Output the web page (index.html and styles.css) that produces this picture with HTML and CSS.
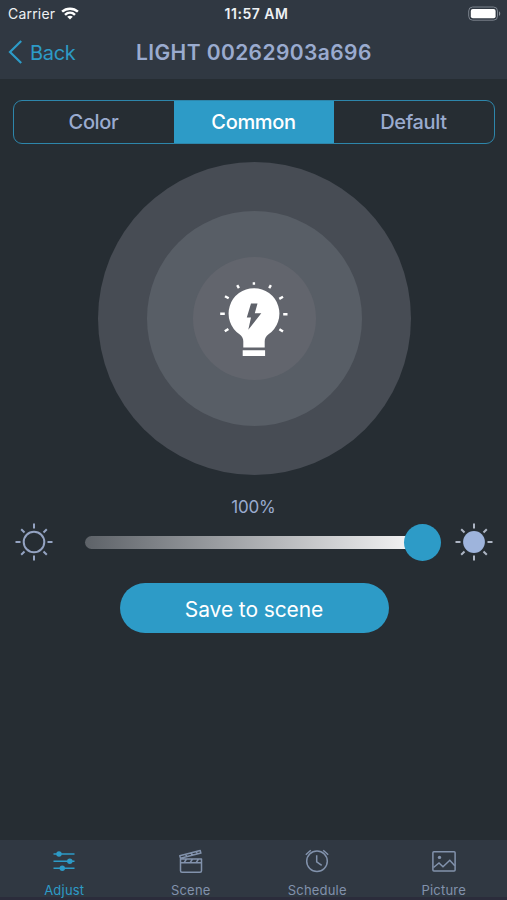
FILE: index.html
```
<!DOCTYPE html>
<html lang="en">
<head>
<meta charset="utf-8">
<title>Light</title>
<link rel="stylesheet" href="styles.css">
</head>
<body>
<div class="app">
  <header class="header">
    <div class="status">
      <div class="carrier"><span class="carrier-name">Carrier</span>
        <svg class="wifi" width="18" height="13" viewBox="0 0 18 13" fill="none" stroke="#fff" stroke-width="2.5"><path d="M1.1 4.7C5.500.6 12.500.6 16.900 4.700"/><path d="M4 7.800C6.900 5.100 11.100 5.100 14 7.800"/><path d="M9 12.600 6.200 9.700C7.800 8.300 10.200 8.300 11.800 9.700Z" fill="#fff" stroke="none"/></svg>
      </div>
      <span class="time">11:57 AM</span>
      <svg class="battery" width="33" height="16" viewBox="0 0 33 16"><rect x=".7" y="1" width="28.800" height="13.200" rx="4" fill="none" stroke="#7b838d" stroke-width="1"/><rect x="2.800" y="3" width="24.800" height="9.200" rx="2" fill="#fff"/><path d="M31 5.200c1.700.8 1.700 4 0 4.800z" fill="#8b929b"/></svg>
    </div>
    <nav class="nav">
      <a class="back"><svg width="15" height="24" viewBox="0 0 15 24" fill="none" stroke="#2d9bc7" stroke-width="2.200"><path d="M13.200 1 2 12l11.200 11"/></svg><span class="back-label">Back</span></a>
      <h1 class="title">LIGHT 00262903a696</h1>
    </nav>
  </header>

  <main class="main">
    <div class="segments">
      <div class="segment"><span>Color</span></div>
      <div class="segment selected"><span>Common</span></div>
      <div class="segment"><span>Default</span></div>
    </div>

    <div class="ring outer"><div class="ring middle"><div class="ring inner">
      <svg class="bulb" width="70" height="76" viewBox="0 0 70 76">
        <path fill="#fff" d="M35 6.200A25.300 25.300 0 0 0 20.500 52.300Q24.300 55 24.300 59.500V65.400H45.700V59.500Q45.700 55 49.500 52.300A25.300 25.300 0 0 0 35 6.200ZM23.700 68.200h22.400v5.900h-22.400z"/>
        <path fill="#5f626a" d="M32 21.500h6.500L35.800 31.300H42.300L29.300 47.800 32 35.500H27.800z"/>
        <g stroke="#fff" stroke-width="2.400"><path d="M34.900.2v2.600M18.200 3.200l1.700 3M51.900 3.200l-1.700 3M6 14.200l3.700 2.100M64 14.800l-3.700 2.100M1.200 31.700h4.600M64.200 32.200h4.300M5.800 49.200l3.600-2.300M64 49.600l-3.600-2.400"/></g>
      </svg>
    </div></div></div>

    <div class="percent">100%</div>
    <div class="dimmer">
      <svg width="38" height="38" viewBox="-19 -19 38 38" stroke="#94a3c2" stroke-width="2" fill="none"><circle r="10.300"/><path d="M0-18.500v5M0 13.500v5M-18.500 0h5M13.500 0h5M-12.800-12.800l3.300 3.300M12.800-12.800l-3.300 3.300M-12.800 12.800l3.300-3.300M12.800 12.800l-3.300-3.300"/></svg>
      <div class="slider"><div class="track"></div><div class="knob"></div></div>
      <svg width="38" height="38" viewBox="-19 -19 38 38" stroke="#adb5c4" stroke-width="2" fill="none"><circle r="10.900" fill="#9eb4dc" stroke="none"/><path d="M0-18.500v5M0 13.500v5M-18.500 0h5M13.500 0h5M-12.800-12.800l3.300 3.300M12.800-12.800l-3.300 3.300M-12.800 12.800l3.300-3.300M12.800 12.800l-3.300-3.300"/></svg>
    </div>
    <button class="save"><span>Save to scene</span></button>
  </main>

  <footer class="tabs">
    <div class="tab active">
      <svg width="24" height="24" viewBox="0 0 24 24" fill="none" stroke="currentColor" stroke-width="1.600"><path d="M1.500 5h21M1.500 12.300h21M1.500 19.200h21"/><g fill="currentColor" stroke="none"><circle cx="7" cy="5" r="2.700"/><circle cx="17.800" cy="12.300" r="2.700"/><circle cx="10.300" cy="19.200" r="2.700"/></g></svg>
      <span class="adjust">Adjust</span>
    </div>
    <div class="tab">
      <svg width="24" height="24" viewBox="0 0 24 24" fill="none" stroke="currentColor" stroke-width="1.500" stroke-linejoin="round"><path d="M1.500 10h21v11.700a1.500 1.500 0 0 1-1.500 1.500H3a1.500 1.500 0 0 1-1.500-1.500zM1.500 13.800h21M7.500 10 5 13.800M13.500 10 11 13.800M19.500 10 17 13.800M1.500 9.300.8 6.800 21.200 1.500l.7 2.600zM6.500 5.500l1.600 2.100M12 4l1.700 2.200M17 2.700l1.700 2.200"/></svg>
      <span class="scene">Scene</span>
    </div>
    <div class="tab">
      <svg width="24" height="24" viewBox="0 0 24 24" fill="none" stroke="currentColor" stroke-width="1.500"><circle cx="12" cy="12.300" r="10.300"/><path d="M11.700 6.300v6.500l5 3.600M.8 5.800 5.800 1.200M23.200 5.800 18.200 1.200"/></svg>
      <span class="schedule">Schedule</span>
    </div>
    <div class="tab">
      <svg width="24" height="24" viewBox="0 0 24 24" fill="none" stroke="currentColor" stroke-width="1.500"><rect x=".9" y="2.700" width="22.200" height="19.400" rx="1"/><path d="m1.500 18.500 5.500-4.600 4 3.900 6.800-6.500 5 5.500"/><circle cx="7.500" cy="8.400" r="1.700" fill="currentColor" stroke="none"/></svg>
      <span class="picture">Picture</span>
    </div>
  </footer>
</div>
</body>
</html>
```
FILE: styles.css
```
* { box-sizing: border-box; }
body { margin: 0; background: #262d33; font-family: Inter, "Liberation Sans", sans-serif; }
svg { display: block; flex: none; }
.app { width: 507px; height: 900px; display: flex; flex-direction: column; background: #262d33; color: #9aabcf; overflow: hidden; }

.header { height: 79px; background: #303842; flex: none; }
.status { height: 27px; display: grid; grid-template-columns: 1fr auto 1fr; align-items: center; padding: 0 6px 0 8px; color: #eef1f4; font-size: 14px; }
.carrier { display: flex; align-items: center; gap: 6px; }
.carrier-name { letter-spacing: .2px; }
.time { font-weight: 600; padding-left: 4px; letter-spacing: .5px; }
.battery { justify-self: end; }
.nav { height: 50px; display: grid; grid-template-columns: 128px 1fr 128px; align-items: center; padding-left: 8px; }
.back { display: flex; align-items: center; gap: 7px; color: #2d9bc7; font-size: 20px; letter-spacing: -.3px; }
.back-label { padding-top: 1px; }
.title { margin: 0; font-size: 21px; font-weight: 600; letter-spacing: .4px; white-space: nowrap; }

.main { flex: 1; display: flex; flex-direction: column; align-items: center; padding-top: 21px; }
.segments { width: 482px; height: 44px; display: grid; grid-template-columns: 1fr 1fr 1fr; border: 1.500px solid #2d86ab; border-radius: 9px; overflow: hidden; font-size: 20px; font-weight: 500; letter-spacing: -.35px; }
.segment { display: grid; place-items: center; }
.selected { background: #2d9bc7; color: #fff; }

.ring { border-radius: 50%; display: grid; place-items: center; }
.outer { width: 313px; height: 313px; margin: 18px 0 0 1px; background: #474c54; }
.middle { width: 215px; height: 215px; background: #585e66; }
.inner { width: 123px; height: 123px; background: #62656d; }
.bulb { margin-top: 2px; }

.percent { margin-top: 22px; height: 20px; line-height: 20px; font-size: 17px; letter-spacing: -.2px; }
.dimmer { width: 478px; height: 38px; margin-top: 6px; display: flex; align-items: center; justify-content: space-between; }
.slider { width: 356px; height: 38px; margin-left: 18px; display: flex; align-items: center; }
.track { width: 324px; height: 13px; border-radius: 7px 0 0 7px; background: linear-gradient(90deg, #5d6268, #f2f2f3); }
.knob { width: 37px; height: 37px; flex: none; margin-left: -5px; border-radius: 50%; background: #2d9bc7; }
.save { width: 269px; height: 50px; margin: 22px 0 0 1px; padding: 2px 0 0; border: 0; border-radius: 25px; background: #2d9bc7; color: #fff; font: 400 21px Inter, "Liberation Sans", sans-serif; letter-spacing: -.1px; }

.tabs { height: 60px; flex: none; display: grid; grid-template-columns: repeat(4, 1fr); background: #303842; border-bottom: 3px solid #2b2c3b; color: #8292ac; font-size: 13px; letter-spacing: .2px; padding-left: 1px; }
.tab { display: flex; flex-direction: column; align-items: center; padding-top: 9px; gap: 9px; line-height: 16px; }
.active { color: #2d9bc7; }
```
